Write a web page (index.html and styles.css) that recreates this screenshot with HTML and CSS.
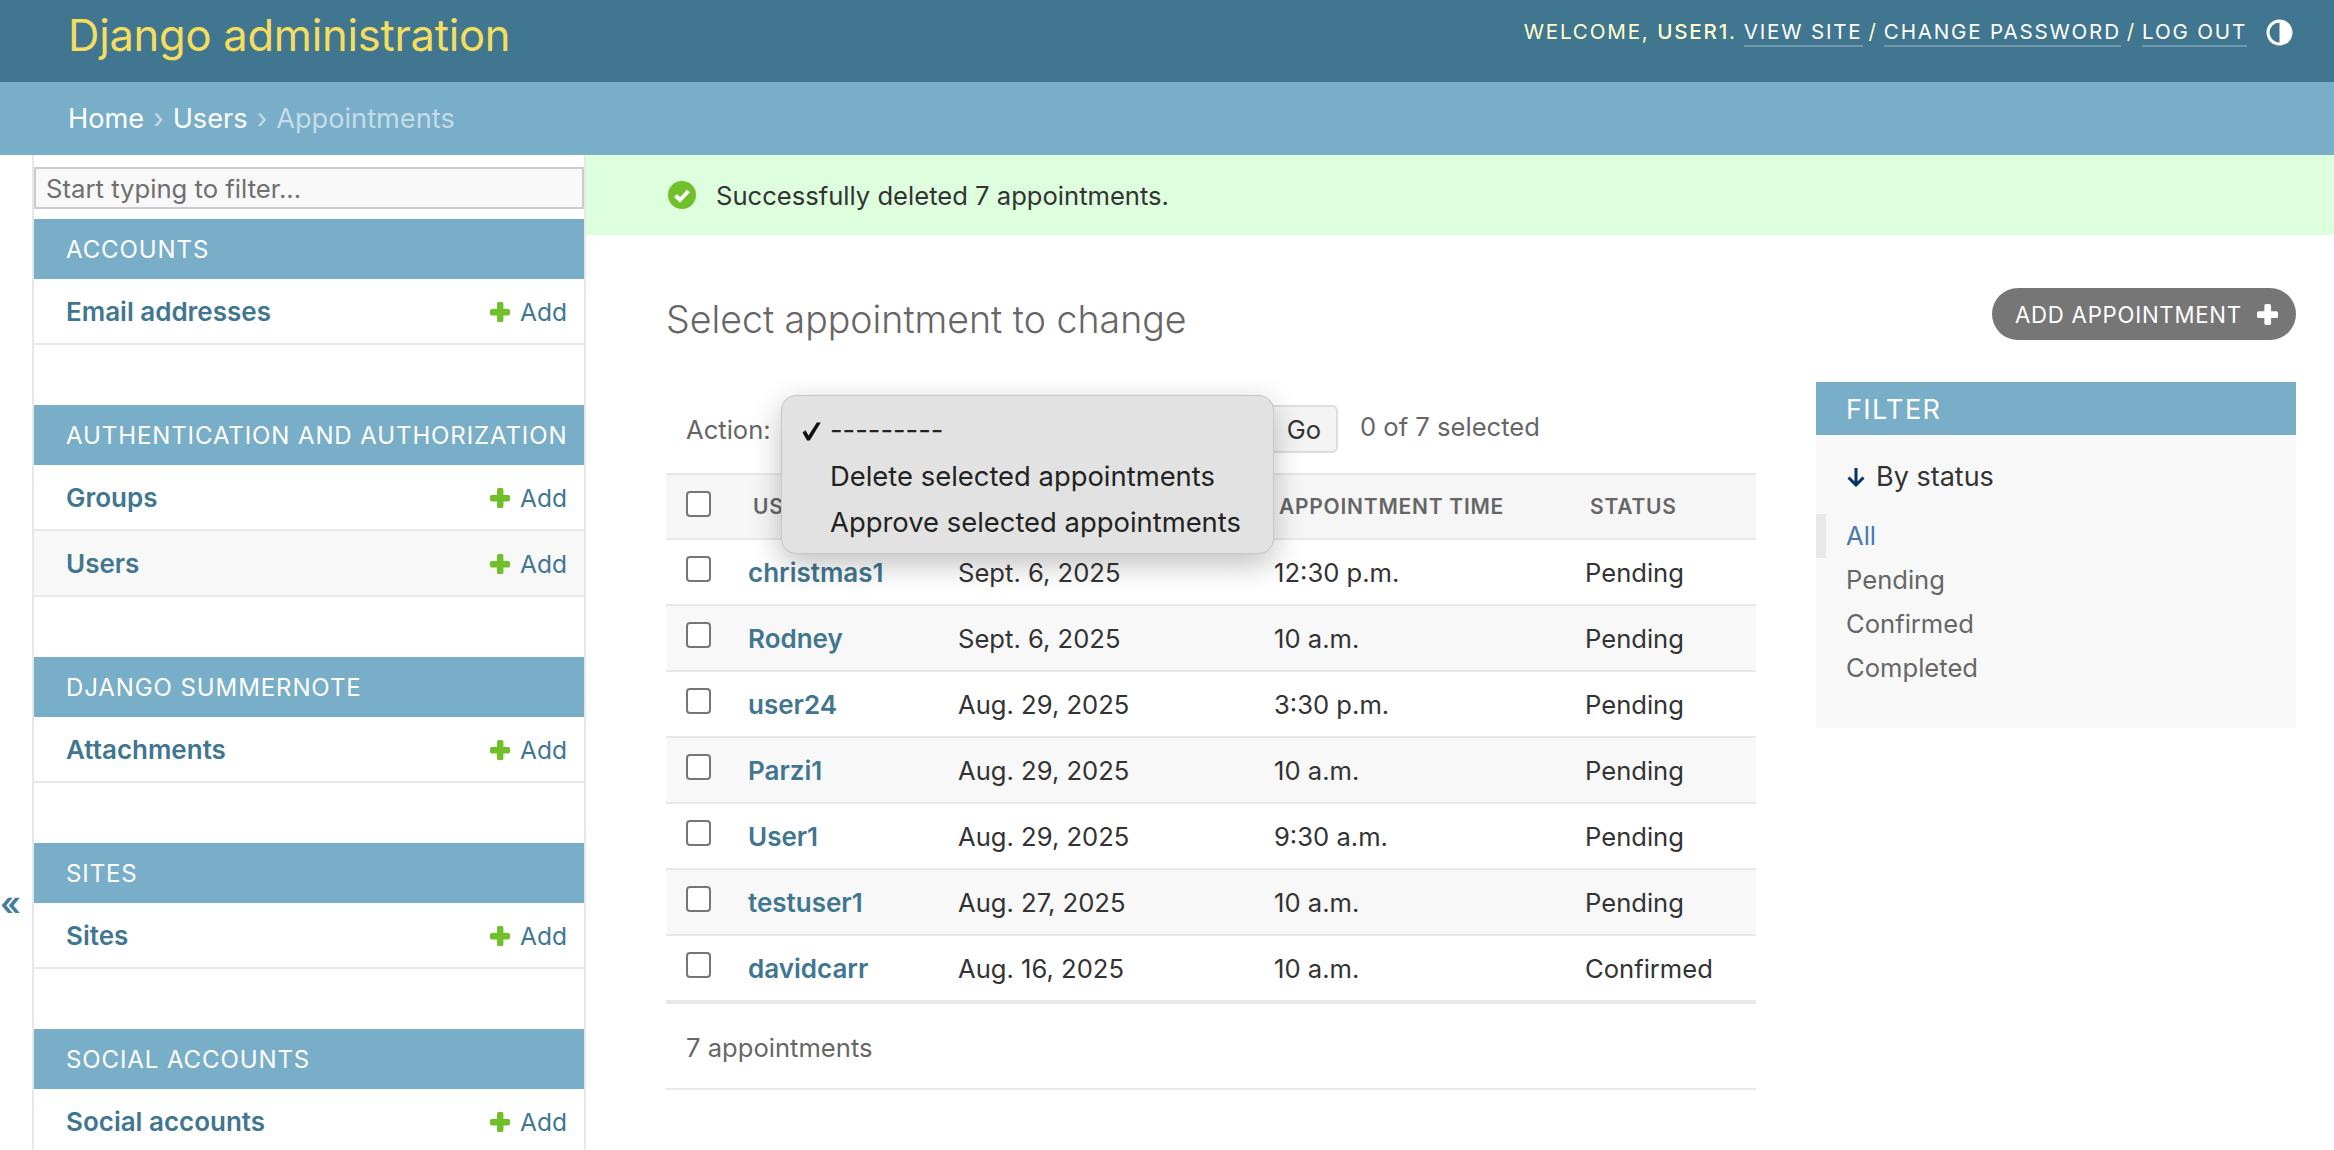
FILE: index.html
```html
<!DOCTYPE html>
<html lang="en">
<head>
<meta charset="utf-8">
<title>Select appointment to change</title>
<link rel="stylesheet" href="styles.css">
</head>
<body>
<svg class="defs" aria-hidden="true"><symbol id="plus" viewBox="0 0 20 20"><rect x="7" width="6.400" height="20" rx="1.600"/><rect y="7" width="20" height="6.400" rx="1.600"/></symbol></svg>
<header class="site-header">
  <div class="branding">Django administration</div>
  <div class="user-tools">
    <span class="welcome">Welcome, <strong class="user-name">user1</strong>.</span>
    <a class="tool-link" href="#">View site</a><span class="sep">/</span><a class="tool-link" href="#">Change password</a><span class="sep">/</span><a class="tool-link" href="#">Log out</a>
    <svg class="theme-icon" viewBox="0 0 27 27"><circle cx="13.5" cy="13.5" r="11.5" fill="none" stroke="#fff" stroke-width="3"/><path d="M13.5 2a11.5 11.5 0 0 1 0 23z" fill="#fff"/></svg>
  </div>
</header>
<nav class="breadcrumbs"><a href="#">Home</a><span class="crumb-sep">›</span><a href="#">Users</a><span class="crumb-sep">›</span><span class="crumb-current">Appointments</span></nav>
<div class="main">
  <div class="toggle-col"><span class="toggle-nav">«</span></div>
  <aside class="sidebar">
    <input class="nav-filter" type="text" placeholder="Start typing to filter...">
    <section class="module">
      <h2 class="caption">Accounts</h2>
      <div class="mod-row"><a class="model-link" href="#">Email addresses</a><a class="add-link" href="#"><svg class="plus"><use href="#plus"/></svg>Add</a></div>
    </section>
    <section class="module">
      <h2 class="caption">Authentication and Authorization</h2>
      <div class="mod-row"><a class="model-link" href="#">Groups</a><a class="add-link" href="#"><svg class="plus"><use href="#plus"/></svg>Add</a></div>
      <div class="mod-row alt"><a class="model-link" href="#">Users</a><a class="add-link" href="#"><svg class="plus"><use href="#plus"/></svg>Add</a></div>
    </section>
    <section class="module">
      <h2 class="caption">Django Summernote</h2>
      <div class="mod-row"><a class="model-link" href="#">Attachments</a><a class="add-link" href="#"><svg class="plus"><use href="#plus"/></svg>Add</a></div>
    </section>
    <section class="module">
      <h2 class="caption">Sites</h2>
      <div class="mod-row"><a class="model-link" href="#">Sites</a><a class="add-link" href="#"><svg class="plus"><use href="#plus"/></svg>Add</a></div>
    </section>
    <section class="module">
      <h2 class="caption">Social Accounts</h2>
      <div class="mod-row"><a class="model-link" href="#">Social accounts</a><a class="add-link" href="#"><svg class="plus"><use href="#plus"/></svg>Add</a></div>
    </section>
  </aside>
  <main class="content">
    <div class="message">
      <svg class="msg-icon" viewBox="0 0 28 28"><circle cx="14" cy="14" r="14" fill="#70bf2b"/><path d="M7.5 14.5l4.500 4.500 8.500-9" fill="none" stroke="#fff" stroke-width="4"/></svg>
      <span>Successfully deleted 7 appointments.</span>
    </div>
    <div class="page">
      <div class="title-row">
        <h1 class="page-title">Select appointment to change</h1>
        <a class="add-button" href="#">Add appointment<svg class="add-plus"><use href="#plus"/></svg></a>
      </div>
      <div class="columns">
        <div class="changelist">
          <div class="actions">
            <span class="action-label">Action:</span>
            <span class="select-spacer"></span>
            <button class="go-button" type="button">Go</button>
            <span class="counter">0 of 7 selected</span>
            <div class="popup">
              <div class="popup-item"><svg class="check" viewBox="0 0 19 19"><path d="M0.500 10.500L3.500 8.300 6.500 13.500 14.800 0.500H18.800L7.800 18.500H5z" fill="#111"/></svg>---------</div>
              <div class="popup-item">Delete selected appointments</div>
              <div class="popup-item">Approve selected appointments</div>
            </div>
          </div>
          <table class="results">
            <colgroup><col class="c-check"><col class="c-user"><col class="c-date"><col class="c-time"><col></colgroup>
            <thead>
              <tr><th><span class="cb"></span></th><th>User</th><th>Appointment date</th><th>Appointment time</th><th>Status</th></tr>
            </thead>
            <tbody>
              <tr><td><span class="cb"></span></td><td><a class="row-link" href="#">christmas1</a></td><td>Sept. 6, 2025</td><td>12:30 p.m.</td><td>Pending</td></tr>
              <tr><td><span class="cb"></span></td><td><a class="row-link" href="#">Rodney</a></td><td>Sept. 6, 2025</td><td>10 a.m.</td><td>Pending</td></tr>
              <tr><td><span class="cb"></span></td><td><a class="row-link" href="#">user24</a></td><td>Aug. 29, 2025</td><td>3:30 p.m.</td><td>Pending</td></tr>
              <tr><td><span class="cb"></span></td><td><a class="row-link" href="#">Parzi1</a></td><td>Aug. 29, 2025</td><td>10 a.m.</td><td>Pending</td></tr>
              <tr><td><span class="cb"></span></td><td><a class="row-link" href="#">User1</a></td><td>Aug. 29, 2025</td><td>9:30 a.m.</td><td>Pending</td></tr>
              <tr><td><span class="cb"></span></td><td><a class="row-link" href="#">testuser1</a></td><td>Aug. 27, 2025</td><td>10 a.m.</td><td>Pending</td></tr>
              <tr><td><span class="cb"></span></td><td><a class="row-link" href="#">davidcarr</a></td><td>Aug. 16, 2025</td><td>10 a.m.</td><td>Confirmed</td></tr>
            </tbody>
          </table>
          <div class="paginator">7 appointments</div>
        </div>
        <aside class="filter">
          <h2 class="filter-title">Filter</h2>
          <div class="filter-body">
            <div class="filter-head"><svg class="arrow" viewBox="0 0 20 20"><path d="M10 1v16M2.500 10.500l7.500 7.500 7.500-7.500" fill="none" stroke="#003366" stroke-width="3"/></svg>By status</div>
            <ul class="filter-list">
              <li class="selected"><a href="#">All</a></li>
              <li><a href="#">Pending</a></li>
              <li><a href="#">Confirmed</a></li>
              <li><a href="#">Completed</a></li>
            </ul>
          </div>
        </aside>
      </div>
    </div>
  </main>
</div>
</body>
</html>
```
FILE: styles.css
```css
* { box-sizing: border-box; }
html, body { margin: 0; height: 1150px; overflow: hidden; background: #fff; }
body { font-family: Inter, "Noto Sans", sans-serif; font-size: 25.6px; color: #333; }
a { text-decoration: none; color: inherit; }
h1, h2, ul { margin: 0; padding: 0; }
.defs { display: none; }

.site-header { height: 82px; background: #417690; display: flex; justify-content: space-between; padding: 0 41px 0 68px; }
.branding { font-size: 43.5px; font-weight: 400; letter-spacing: -0.25px; color: #f5dd5d; line-height: 70px; }
.user-tools { display: flex; align-items: flex-start; font-size: 20.6px; letter-spacing: 1.8px; text-transform: uppercase; color: #ffc; padding-top: 19px; }
.welcome { margin-right: 7px; line-height: 26px; }
.user-name { font-weight: 500; }
.tool-link { color: #fff; border-bottom: 2px solid rgba(255,255,255,.25); line-height: 26px; height: 28px; }
.sep { margin: 0 6px; line-height: 26px; }
.theme-icon { width: 27px; height: 27px; margin-left: 19px; }

.breadcrumbs { height: 73px; background: #79aec8; padding: 0 68px; display: flex; align-items: center; font-size: 27.2px; color: #fff; }
.crumb-sep { margin: 0 9px; color: #c4dce8; }
.crumb-current { color: #c4dce8; }

.main { display: flex; height: 995px; }
.toggle-col { width: 32px; position: relative; flex: none; }
.toggle-nav { position: absolute; left: 0; top: 728px; font-size: 33px; line-height: 40px; color: #447e9b; font-weight: 600; }
.sidebar { width: 554px; flex: none; border-left: 2px solid #e8e8e8; border-right: 2px solid #e8e8e8; padding-top: 12px; height: 995px; overflow: hidden; }
.nav-filter { display: block; width: 100%; height: 42px; margin-bottom: 10px; border: 2px solid #ccc; background: #f8f8f8; font: 25.7px Inter, sans-serif; padding: 0 10px; color: #333; border-radius: 0; outline: 0; }
.nav-filter::placeholder { color: #6f6f6f; opacity: 1; }
.module { margin-bottom: 60px; }
.caption { height: 60px; line-height: 62px; background: #79aec8; color: #fff; font-size: 24px; font-weight: 400; letter-spacing: 0.9px; text-transform: uppercase; padding-left: 32px; white-space: nowrap; }
.mod-row { height: 66px; border-bottom: 2px solid #e8e8e8; display: flex; align-items: center; justify-content: space-between; padding: 1px 17px 0 32px; }
.mod-row.alt { background: #f8f8f8; }
.model-link { color: #417690; font-weight: 600; font-size: 26px; }
.add-link { color: #417690; display: flex; align-items: center; font-size: 24.5px; }
.plus { width: 20px; height: 20px; margin-right: 10px; fill: #70bf2b; }

.content { flex: 1; min-width: 0; }
.message { height: 80px; background: #dfd; display: flex; align-items: center; padding-left: 82px; gap: 20px; }
.msg-icon { width: 28px; height: 28px; flex: none; }
.page { padding: 0 38px 0 80px; }
.title-row { display: flex; justify-content: space-between; padding-top: 53px; height: 105px; }
.page-title { font-size: 37.5px; font-weight: 300; color: #666; line-height: 60px; margin-top: 2px; }
.add-button { height: 52px; width: 304px; border-radius: 26px; background: #767676; color: #fff; font-size: 22.2px; letter-spacing: 0.75px; text-transform: uppercase; display: flex; align-items: center; padding-left: 23px; white-space: nowrap; }
.add-plus { width: 21px; height: 21px; margin-left: 15px; fill: #fff; }
.columns { display: flex; justify-content: space-between; margin-top: 42px; }
.changelist { width: 1090px; }
.actions { height: 91px; position: relative; display: flex; align-items: flex-start; padding: 23px 0 0 20px; }
.action-label { color: #666; line-height: 50px; width: 78px; }
.select-spacer { width: 500px; }
.go-button { width: 74px; height: 48px; font: 25.5px Inter, sans-serif; color: #333; background: #f4f4f4; border: 2px solid #ddd; border-radius: 6px; padding: 0 15px 0 0; text-align: right; }
.counter { color: #666; margin-left: 22px; line-height: 44px; }
.popup { position: absolute; left: 115px; top: 13px; width: 493px; height: 159px; background: #e2e2e2; border: 1px solid #c6c6c6; border-radius: 15px; box-shadow: 0 10px 30px rgba(0,0,0,.25); padding-top: 11px; z-index: 5; }
.popup-item { height: 46px; line-height: 46px; padding-left: 48px; font-size: 27.4px; color: #222; position: relative; white-space: nowrap; }
.check { position: absolute; left: 20px; top: 15px; width: 19px; height: 19px; }

.results { width: 100%; border-collapse: separate; border-spacing: 0; table-layout: fixed; }
.c-check { width: 82px; } .c-user { width: 210px; } .c-date { width: 316px; } .c-time { width: 311px; }
.results th { height: 67px; background: #f6f6f6; border-top: 2px solid #e8e8e8; border-bottom: 2px solid #e8e8e8; text-align: left; font-size: 21px; font-weight: 600; letter-spacing: 0.75px; text-transform: uppercase; color: #666; padding: 0 0 0 5px; white-space: nowrap; }
.results th:first-child { padding: 16px 0 0 20px; vertical-align: top; }
.results td { height: 66px; border-bottom: 2px solid #e8e8e8; padding: 1px 0 0; color: #333; }
.results td:first-child { padding: 16px 0 0 20px; vertical-align: top; }
.results tbody tr:nth-child(even) td { background: #f8f8f8; }
.cb { display: block; width: 25px; height: 26px; border: 2px solid #767676; border-radius: 4px; background: #fff; }
.row-link { color: #417690; font-weight: 600; font-size: 26px; }
.paginator { height: 88px; border-top: 2px solid #e8e8e8; border-bottom: 2px solid #e8e8e8; padding-left: 20px; line-height: 87px; color: #666; }

.filter { width: 480px; height: 346px; background: #f8f8f8; }
.filter-title { height: 53px; line-height: 55px; background: #79aec8; color: #fff; font-size: 27px; font-weight: 400; letter-spacing: 1.4px; text-transform: uppercase; padding-left: 30px; }
.filter-head { display: flex; align-items: center; padding: 26px 0 0 30px; line-height: 32px; font-size: 27px; color: #333; }
.arrow { width: 20px; height: 20px; margin-right: 10px; }
.filter-list { list-style: none; margin-top: 21px; }
.filter-list li { height: 44px; line-height: 44px; padding-left: 30px; color: #666; }
.filter-list li.selected { border-left: 10px solid #e8e8e8; padding-left: 20px; color: #4a78ad; }
```
